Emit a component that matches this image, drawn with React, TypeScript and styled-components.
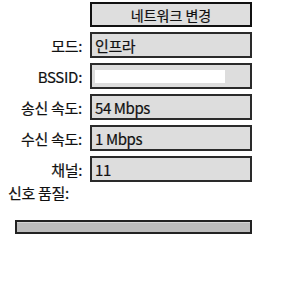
import { Fragment } from 'react';
import styled, { createGlobalStyle } from 'styled-components';

const GlobalStyle = createGlobalStyle`
  html, body {
    margin: 0;
    padding: 0;
    background: #ffffff;
  }
  body {
    font-family: 'Noto Sans CJK KR', 'Noto Sans', sans-serif;
    color: #111;
  }
`;

const Panel = styled.div`
  width: 300px;
  height: 300px;
  padding-top: 2px;
  box-sizing: border-box;
  display: flex;
  flex-direction: column;
`;

const Form = styled.div`
  display: grid;
  grid-template-columns: 82px 162px;
  column-gap: 8px;
  row-gap: 5px;
  align-items: center;
`;

const ChangeButton = styled.button`
  grid-column: 2;
  height: 25px;
  box-sizing: border-box;
  border: 2px solid #111;
  background: #dedede;
  font-family: 'Noto Sans CJK KR', sans-serif;
  font-size: 14px;
  color: #111;
  padding: 0;
  line-height: 1;
  -webkit-text-stroke: 0.2px #111;
`;

const Label = styled.div`
  text-align: right;
  font-size: 15px;
  line-height: 1;
  letter-spacing: -0.3px;
  -webkit-text-stroke: 0.2px #111;
`;

const Field = styled.div`
  height: 26px;
  box-sizing: border-box;
  border: 2px solid #2a2a2a;
  background: #dddddd;
  padding: 0 3px;
  display: flex;
  align-items: center;
  font-size: 15px;
  letter-spacing: -0.4px;
  -webkit-text-stroke: 0.2px #111;
`;

const Masked = styled.div`
  width: 130px;
  height: 13px;
  background: #ffffff;
`;

const SignalLabel = styled.div`
  margin: 2px 0 0 8px;
  font-size: 15px;
  line-height: 18px;
  letter-spacing: -0.3px;
  -webkit-text-stroke: 0.2px #111;
`;

const Meter = styled.div`
  margin: 18px 0 0 15px;
  width: 237px;
  height: 14px;
  box-sizing: border-box;
  border: 2px solid #222;
  background: #bcbcbc;
  box-shadow: inset 0 1px 0 #d4d4d4;
`;

const rows: { label: string; value?: string; masked?: boolean }[] = [
  { label: '모드:', value: '인프라' },
  { label: 'BSSID:', masked: true },
  { label: '송신 속도:', value: '54 Mbps' },
  { label: '수신 속도:', value: '1 Mbps' },
  { label: '채널:', value: '11' },
];

export default function App() {
  return (
    <>
      <GlobalStyle />
      <Panel>
        <Form>
          <ChangeButton>네트워크 변경</ChangeButton>
          {rows.map((r) => (
            <Fragment key={r.label}>
              <Label>{r.label}</Label>
              <Field>{r.masked ? <Masked /> : r.value}</Field>
            </Fragment>
          ))}
        </Form>
        <SignalLabel>신호 품질:</SignalLabel>
        <Meter />
      </Panel>
    </>
  );
}
